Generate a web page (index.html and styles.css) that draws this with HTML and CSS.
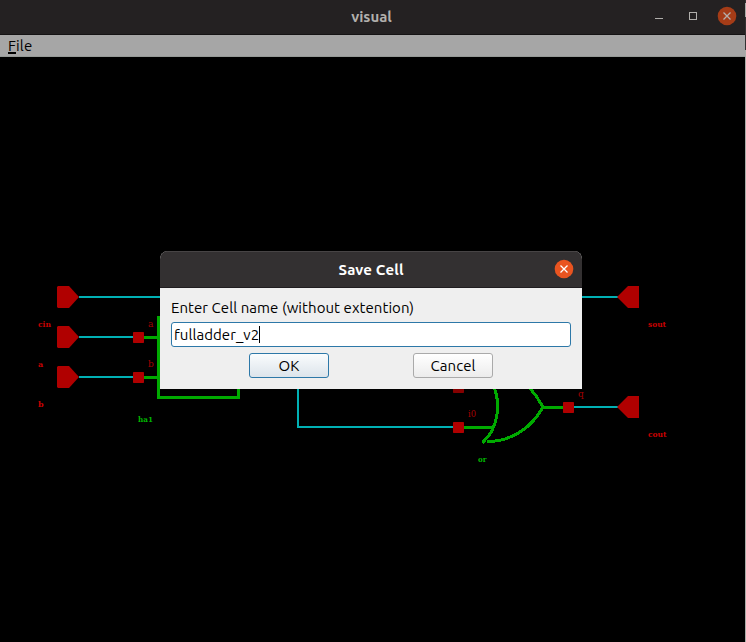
FILE: index.html
```html
<!DOCTYPE html>
<html lang="en">
<head>
<meta charset="utf-8">
<title>visual</title>
<link rel="stylesheet" href="styles.css">
</head>
<body>
<div class="desktop">
  <main class="window">
    <header class="titlebar">
      <h1 class="title">visual</h1>
      <svg class="controls" width="106" height="34" viewBox="0 0 106 34">
        <path d="M15 18.5h8" stroke="#b0aeab" fill="none"/>
        <rect x="49.5" y="12.5" width="7" height="7" stroke="#b0aeab" fill="none"/>
        <circle cx="87" cy="16" r="9.3" fill="#a53c17"/>
        <path d="M83.5 12.5l7 7m0-7l-7 7" stroke="#b5b0ac" stroke-width="1.3" fill="none"/>
      </svg>
    </header>
    <nav class="menubar"><span class="mnemonic">F</span>ile</nav>
    <svg class="schematic" width="745" height="585" viewBox="0 57 745 585">
      <g class="wire">
        <path d="M79 297H170M79 337H134M79 377H134M570 297H618M573 407H618M298 380V427H454"/>
      </g>
      <g class="part">
        <path d="M144 337.5H158M144 377.5H158M158.500 316V397.500H238.500V380M464 427.500H493M543 407.500H564"/>
        <path d="M494 387C501 405 498 429 482.500 442.500M529 387Q537 396 543 407C533 426 512 442 487 441.500"/>
      </g>
      <g class="pin">
        <path d="M58 286H69L79 297L69 308H58L57 307V287Z"/>
        <path d="M58 326H69L79 337L69 348H58L57 347V327Z"/>
        <path d="M58 366H69L79 377L69 388H58L57 387V367Z"/>
        <path d="M639 286H628L617 297L628 308H639Z"/>
        <path d="M639 396H628L617 407L628 418H639Z"/>
        <rect x="133" y="332" width="11" height="11" rx=".7"/>
        <rect x="133" y="372" width="11" height="11" rx=".7"/>
        <rect x="453" y="422" width="11" height="11" rx=".7"/>
        <rect x="563" y="402" width="11" height="11" rx=".7"/>
        <rect class="shade" x="453" y="382" width="11" height="11" rx=".7"/>
      </g>
      <g class="label">
        <text x="38" y="327" textLength="13" lengthAdjust="spacingAndGlyphs">cin</text>
        <text x="38" y="367">a</text>
        <text x="38" y="407">b</text>
        <text x="648" y="327" textLength="18" lengthAdjust="spacingAndGlyphs">sout</text>
        <text x="648" y="437" textLength="18.5" lengthAdjust="spacingAndGlyphs">cout</text>
        <text class="green" x="138" y="422" textLength="15" lengthAdjust="spacingAndGlyphs">ha1</text>
        <text class="green" x="478" y="462" textLength="8.5" lengthAdjust="spacingAndGlyphs">or</text>
      </g>
      <g class="port">
        <text x="148" y="327">a</text>
        <text x="148" y="367">b</text>
        <text x="468" y="417" textLength="8" lengthAdjust="spacingAndGlyphs">i0</text>
        <text x="578" y="397">q</text>
      </g>
    </svg>
  </main>
  <svg class="edge" width="1" height="642"><path d="M0 0h1v3h-1zM0 17h1v33h-1z" fill="#343132"/></svg>
  <section class="dialog">
    <header class="dialog-title">
      <h2 class="title">Save Cell</h2>
      <svg class="dialog-close" width="20" height="20" viewBox="0 0 20 20">
        <circle cx="10" cy="10" r="9.3" fill="#e95420"/>
        <path d="M6.500 6.500l7 7m0-7l-7 7" stroke="#fff" stroke-width="1.300" fill="none"/>
      </svg>
    </header>
    <div class="dialog-body">
      <label class="prompt">Enter Cell name (without extention)</label>
      <div class="field"><span>fulladder_v2</span><i class="caret"></i></div>
      <div class="actions">
        <button class="button primary">OK</button>
        <button class="button">Cancel</button>
      </div>
    </div>
  </section>
</div>
</body>
</html>
```
FILE: styles.css
```css
* { box-sizing: border-box; }
body { margin: 0; background: #000; font: 15px/20px Ubuntu, "Noto Sans", sans-serif; }
.desktop { position: relative; display: flex; width: 746px; height: 642px; overflow: hidden; }
.window { width: 745px; }
.edge { display: block; background: #aaaca8; }
.titlebar { position: relative; display: flex; justify-content: center; height: 35px; padding-right: 2px; background: #242122; border-bottom: 1px solid #151314; }
.title { margin: 0; font-size: 15px; line-height: 34px; font-weight: 700; color: #b2b0ad; white-space: nowrap; }
.controls { position: absolute; right: -1px; top: 0; }
.menubar { height: 22px; padding-left: 8px; background: #a6a6a6; border-bottom: 1px solid #959996; color: #000; line-height: 22px; letter-spacing: .15px; }
.mnemonic { border-bottom: 2px solid #000; display: inline-block; line-height: 13px; }
.schematic { display: block; }
.wire { fill: none; stroke: #00b0b4; stroke-width: 2; }
.part { fill: none; stroke: #00aa00; stroke-width: 3; stroke-linejoin: round; shape-rendering: crispEdges; }
.pin { fill: #b00000; }
.shade { fill: #850000; }
.label, .port { font-family: "DejaVu Serif", serif; font-size: 8px; }
.label { font-weight: 700; fill: #c80000; }
.port { fill: #a80000; font-size: 9px; }
.label .green { fill: #00b400; }
.dialog { position: absolute; left: 160px; top: 251px; width: 422px; height: 138px; border-radius: 8px 8px 0 0; overflow: hidden; background: #efefef; }
.dialog-title { position: relative; display: flex; justify-content: center; height: 37px; background: #333031; border-top: 1px solid #474445; border-bottom: 1px solid #201d20; }
.dialog-title .title { color: #fff; line-height: 36px; letter-spacing: .15px; }
.dialog-close { position: absolute; right: 8px; top: 7px; }
.dialog-body { padding: 10px 11px; color: #000; letter-spacing: .06px; }
.prompt { display: block; height: 24px; white-space: nowrap; }
.field { display: flex; align-items: center; width: 400px; height: 25px; padding-left: 2px; background: #fff; border: 1px solid #2d78a8; border-radius: 3px; }
.caret { width: 1px; height: 17px; background: #000; }
.actions { display: flex; gap: 84px; padding: 6px 0 0 78px; }
.button { width: 80px; height: 25px; padding: 0; font: inherit; letter-spacing: .1px; color: #000; border: 1px solid #aaa; border-radius: 3px; background: linear-gradient(#fff, #ececec); }
.primary { border-color: #2d78a8; background: linear-gradient(#fafcfd, #dce4eb); }
```
